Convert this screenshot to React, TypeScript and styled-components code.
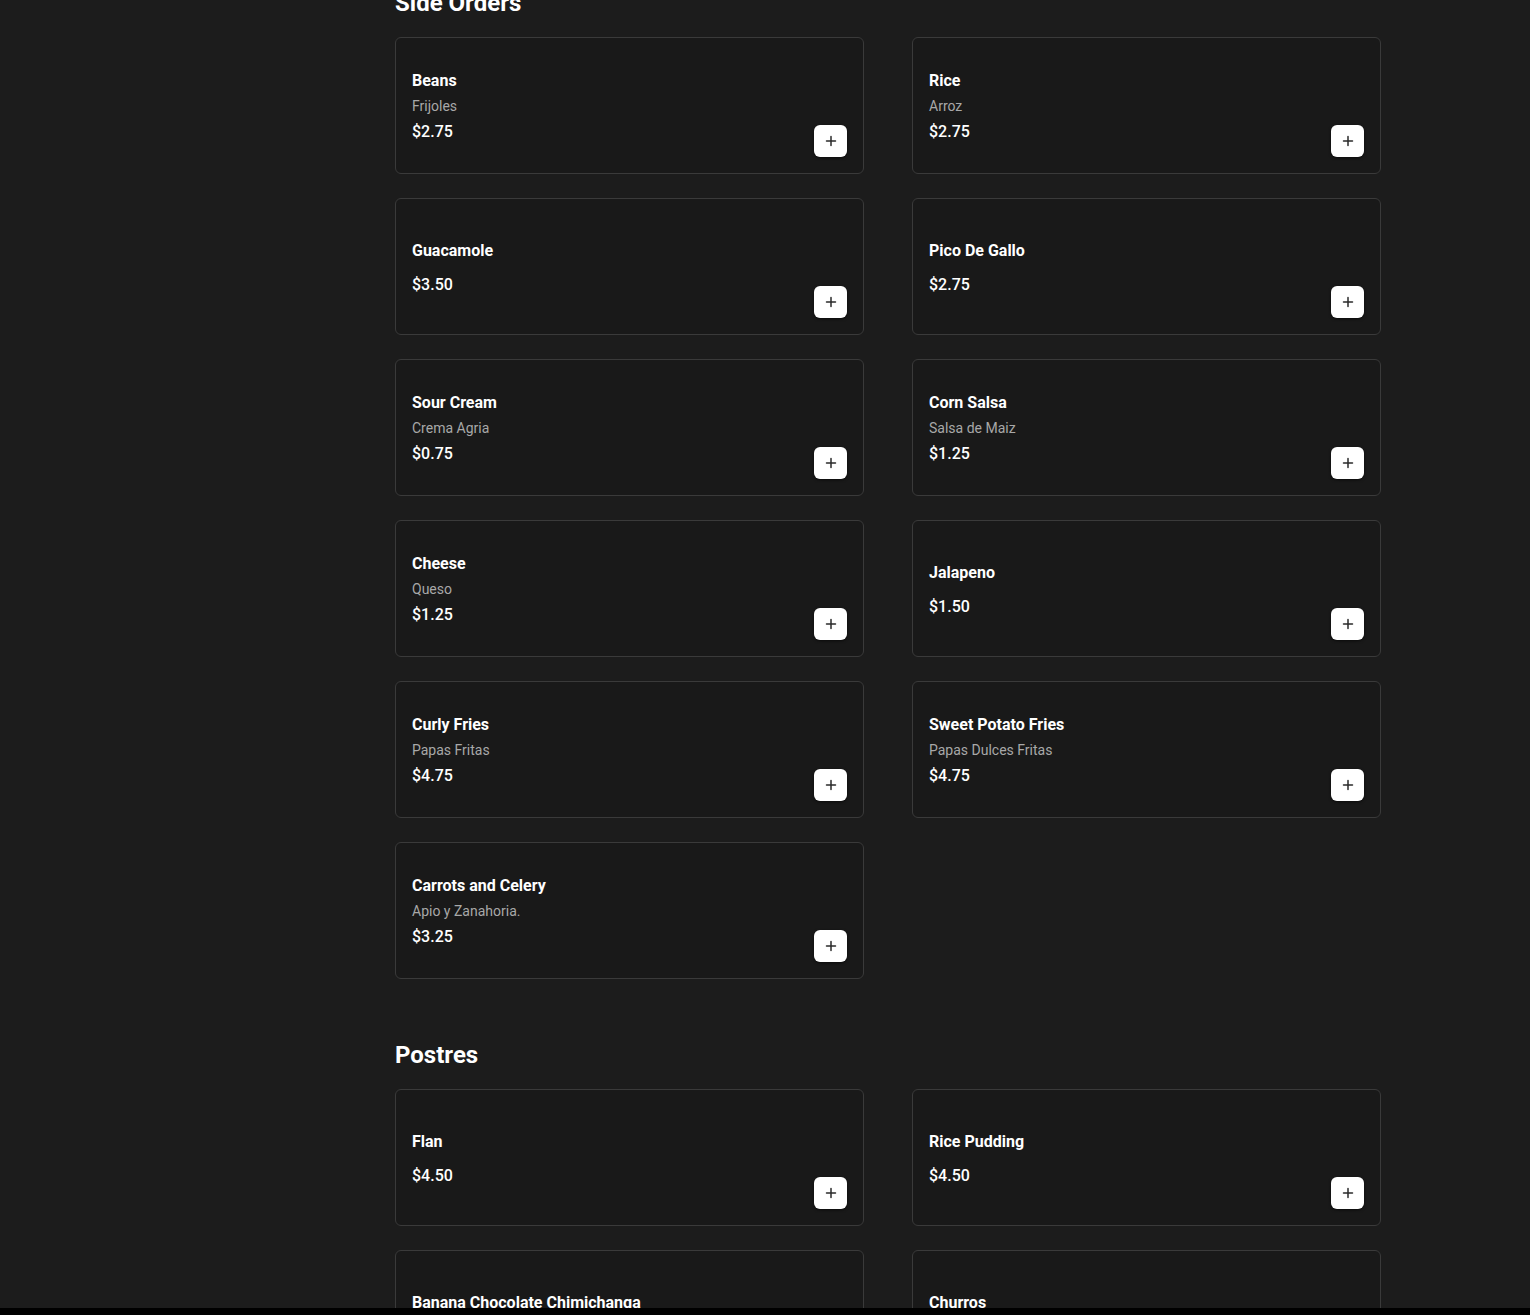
import React from 'react'
import styled, { createGlobalStyle } from 'styled-components'

interface Item {
    name: string,
    desc?: string,
    price: string
}

const sections: { title: string, items: Item[] }[] = [
    {
        title: 'Side Orders',
        items: [
            { name: 'Beans', desc: 'Frijoles', price: '$2.75' },
            { name: 'Rice', desc: 'Arroz', price: '$2.75' },
            { name: 'Guacamole', price: '$3.50' },
            { name: 'Pico De Gallo', price: '$2.75' },
            { name: 'Sour Cream', desc: 'Crema Agria', price: '$0.75' },
            { name: 'Corn Salsa', desc: 'Salsa de Maiz', price: '$1.25' },
            { name: 'Cheese', desc: 'Queso', price: '$1.25' },
            { name: 'Jalapeno', price: '$1.50' },
            { name: 'Curly Fries', desc: 'Papas Fritas', price: '$4.75' },
            { name: 'Sweet Potato Fries', desc: 'Papas Dulces Fritas', price: '$4.75' },
            { name: 'Carrots and Celery', desc: 'Apio y Zanahoria.', price: '$3.25' },
        ],
    },
    {
        title: 'Postres',
        items: [
            { name: 'Flan', price: '$4.50' },
            { name: 'Rice Pudding', price: '$4.50' },
            { name: 'Banana Chocolate Chimichanga', price: '$5.50' },
            { name: 'Churros', price: '$4.50' },
        ],
    },
]

const PlusIcon = () => (
    <svg width="12" height="12" viewBox="0 0 12 12" fill="none">
        <path d="M6 1.5v9M1.5 6h9" stroke="#2a2a2a" strokeWidth="1.5" strokeLinecap="round" />
    </svg>
)

const MenuCard = ({ name, desc, price }: Item) => {
    return (
        <Card>
            <Info>
                <Name>{name}</Name>
                {desc && <Desc>{desc}</Desc>}
                <Price $spaced={!desc}>{price}</Price>
            </Info>
            <AddButton aria-label={`Add ${name}`}>
                <PlusIcon />
            </AddButton>
        </Card>
    )
}

export default function App() {
    return (
        <>
            <GlobalStyle />
            <Page>
                <Main>
                    {sections.map(section => (
                        <Section key={section.title}>
                            <Heading>{section.title}</Heading>
                            <Grid>
                                {section.items.map(item => (
                                    <MenuCard key={item.name} {...item} />
                                ))}
                            </Grid>
                        </Section>
                    ))}
                </Main>
            </Page>
            <BottomBar />
        </>
    )
}

const GlobalStyle = createGlobalStyle`
    * {
        box-sizing: border-box;
    }
    html, body {
        margin: 0;
        padding: 0;
        background: #1c1c1c;
        font-family: Roboto, "Liberation Sans", sans-serif;
        color: #fff;
        overflow: hidden;
    }
`

const Page = styled.div`
    display: grid;
    grid-template-columns: 395px 986px;
    height: 1315px;
    overflow: hidden;
`

const Main = styled.main`
    grid-column: 2;
    display: flex;
    flex-direction: column;
    gap: 58px;
    margin-top: -15px;
`

const Section = styled.section`
    display: flex;
    flex-direction: column;
    gap: 16px;
`

const Heading = styled.h2`
    margin: 0;
    font-size: 24px;
    line-height: 36px;
    font-weight: 700;
    color: #fff;
`

const Grid = styled.div`
    display: grid;
    grid-template-columns: repeat(2, 469px);
    column-gap: 48px;
    row-gap: 24px;
`

const Card = styled.div`
    display: flex;
    align-items: center;
    justify-content: space-between;
    height: 137px;
    padding: 16px;
    background: #191919;
    border: 1px solid #3a3a3a;
    border-radius: 6px;
`

const Info = styled.div`
    display: flex;
    flex-direction: column;
    padding-top: 2px;
`

const Name = styled.div`
    font-size: 16px;
    line-height: 24px;
    font-weight: 700;
    color: #fff;
`

const Desc = styled.div`
    margin-top: 3px;
    font-size: 14px;
    line-height: 20px;
    color: #a8a8a8;
`

const Price = styled.div<{ $spaced: boolean }>`
    margin-top: ${props => props.$spaced ? 10 : 4}px;
    font-size: 16px;
    line-height: 24px;
    font-weight: 500;
    color: #fff;
`

const AddButton = styled.button`
    align-self: flex-end;
    display: flex;
    align-items: center;
    justify-content: center;
    width: 33px;
    height: 32px;
    padding: 0;
    border: none;
    border-radius: 6px;
    background: #fff;
    box-shadow: 0 1px 3px rgba(0, 0, 0, 0.6);
    cursor: pointer;
`

const BottomBar = styled.div`
    position: fixed;
    left: 0;
    right: 0;
    bottom: 0;
    height: 7px;
    background: #000;
`
